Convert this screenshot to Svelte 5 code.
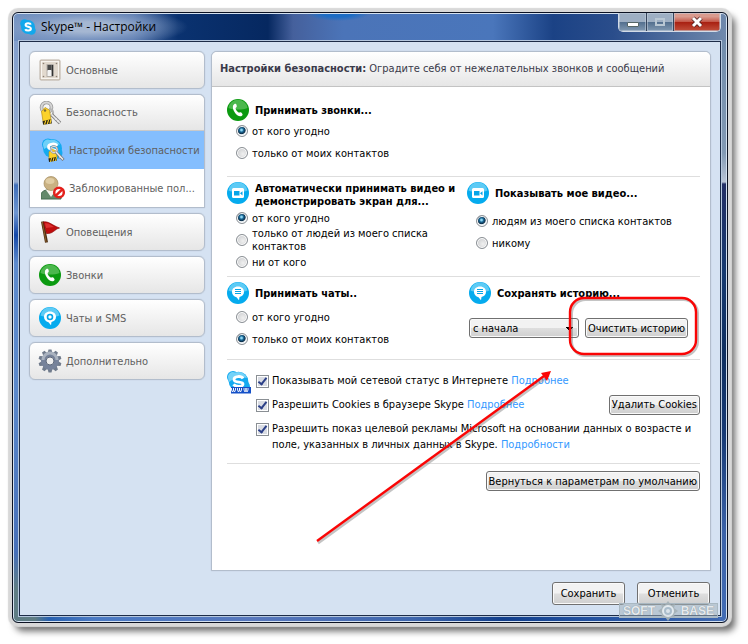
<script>
  const menuTop = [{ id: 'general', label: 'Основные' }];
  const menuBottom = [
    { id: 'flag', label: 'Оповещения' },
    { id: 'phone', label: 'Звонки' },
    { id: 'sms', label: 'Чаты и SMS' },
    { id: 'gear', label: 'Дополнительно' }
  ];
  let calls = $state('all');
  let autoVideo = $state('all');
  let myVideo = $state('contacts');
  let chats = $state('contacts');
  let history = $state('forever');
  const teeth = [0, 36, 72, 108, 144, 180, 216, 252, 288, 324];
</script>

{#snippet icon(id)}
  {#if id === 'general'}
    <svg class="ico24" viewBox="0 0 24 24" aria-hidden="true">
      <rect x="2" y="2" width="20" height="20" rx="1" fill="#e2d9ce" stroke="#b9aea2" />
      <rect x="3.500" y="3.500" width="17" height="17" fill="none" stroke="#f8f4ef" />
      <rect x="8.500" y="6" width="7" height="13" fill="#b4aea8" />
      <rect x="9.500" y="7" width="4" height="6" fill="#4a4a4a" />
      <rect x="9.500" y="12" width="4" height="6" fill="#f4f4f4" />
      <path d="M14.500 7v11" stroke="#333" stroke-width="1.500" />
      <g fill="#8b7f75"><circle cx="5.500" cy="5.500" r=".8" /><circle cx="18.500" cy="5.500" r=".8" /><circle cx="5.500" cy="18.500" r=".8" /><circle cx="18.500" cy="18.500" r=".8" /></g>
    </svg>
  {:else if id === 'keys'}
    <svg class="ico24" viewBox="0 0 24 24" aria-hidden="true">
      <circle cx="8.500" cy="6.500" r="5" fill="none" stroke="#9b9b9b" stroke-width="3.600" />
      <circle cx="8.500" cy="6.500" r="5" fill="none" stroke="#d6d6d6" stroke-width="2" />
      <path d="M3.500 10.500l3.500-4 4.500 2.500 1.500 9.500-8 1.800z" fill="#fcd22b" stroke="#b98f10" stroke-width=".7" />
      <path d="M4.500 20.200l8.800-2 .5 4.300-8.600 1.300z" fill="#2a2410" />
      <path d="M6.500 23.500l1.300-4M9.300 23l1.300-4M12 22.500l1-4" stroke="#fcd22b" stroke-width="1.100" />
      <path d="M11 8c4 0 5 4 3.500 6" fill="none" stroke="#b5b5b5" stroke-width="2" />
      <path d="M13.500 13.500l8.500 8.500M16.500 19l2-2M19 21.500l2-2" stroke="#838383" stroke-width="3.400" />
      <path d="M13.500 13.500l8.300 8.300M17 18.500l1.500-1.500M19.500 21l1.500-1.500" stroke="#ececec" stroke-width="1.600" />
      <circle cx="7" cy="9.500" r="1.200" fill="#7c6b35" />
    </svg>
  {:else if id === 'skypekeys'}
    <svg class="ico24" viewBox="0 0 24 24" aria-hidden="true">
      <g fill="#14aaf0"><circle cx="7" cy="6.500" r="6" /><circle cx="11.500" cy="10.500" r="9.500" /><circle cx="15.500" cy="15" r="6" /></g>
      <path d="M2 7a5 5 0 0 1 7-5 9.500 9.500 0 0 1 10 4.500C14 6 8 8 3 11z" fill="#6fd0f8" />
      <path d="M16 8c-1.500-3-8.500-2.500-8.500 1 0 4 8.500 1.500 8.500 5.500" fill="none" stroke="#fff" stroke-width="2.800" />
      <path d="M8 14l3-3 4 2 1 6-8 2z" fill="#fcd22b" stroke="#c2920b" stroke-width=".6" />
      <path d="M7.500 20.500l8-1.500.5 3.500-8 1.500z" fill="#2a2410" />
      <path d="M9.500 24l1-4M12 23.500l1-4M14.500 23l1-4" stroke="#fcd22b" />
      <circle cx="13" cy="11.500" r="3.200" fill="none" stroke="#999" stroke-width="2" />
      <circle cx="13" cy="11.500" r="3.200" fill="none" stroke="#ddd" />
      <path d="M15 14l7.500 8M18 20l2-2" stroke="#777" stroke-width="3" /><path d="M15 14l7 7.500M18.500 19.500l1-1" stroke="#ececec" stroke-width="1.500" />
    </svg>
  {:else if id === 'blocked'}
    <svg class="ico24" viewBox="0 0 24 24" aria-hidden="true">
      <path d="M0 23v-4c0-3 3-5 7-5h6c4 0 7 2 7 5v4z" fill="#63896b" stroke="#456a50" />
      <path d="M5 14l5 7 5-7z" fill="#f4f4ee" />
      <circle cx="10" cy="7.500" r="7" fill="#c9b182" stroke="#a38b5e" stroke-width=".7" />
      <ellipse cx="9" cy="5" rx="4.500" ry="3" fill="#e0cda5" />
      <circle cx="18" cy="16.500" r="4.800" fill="#fff" stroke="#e3211c" stroke-width="2.500" />
      <path d="M14.800 19.700l6.500-6.400" stroke="#e3211c" stroke-width="2.500" />
    </svg>
  {:else if id === 'flag'}
    <svg class="ico24" viewBox="0 0 24 24" aria-hidden="true">
      <path d="M4.500 1.500l4 21" stroke="#4d2f12" stroke-width="3" />
      <path d="M4.300 2l3.800 20" stroke="#8c5e2c" />
      <path d="M5.500 2c5-1 8 3 16 6-5 1-6 6-13 5.500z" fill="#c00d0d" stroke="#8c0606" stroke-width=".7" />
      <path d="M7 3.200c4-.5 6 2 9 3.800-3 0-5 1-8 1z" fill="#dc2f2f" />
    </svg>
  {:else if id === 'phone'}
    <svg class="ico22" viewBox="0 0 22 22" aria-hidden="true">
      <circle cx="11" cy="11" r="11" fill="#0b9a10" />
      <path d="M1.500 9a9.600 9.600 0 0 1 19 0c-5 2-14 2-19 0z" fill="#4bb84d" />
      <path d="M6.200 6.200C7 5 8 4.400 8.700 4.800c.9.500 1.200 2.200 1 3-.2.800-1.200.9-1.100 1.700.2 1.400 1.800 3.400 3 4 .8.300 1.300-.5 2-.3.900.3 2 1.500 2 2.300 0 .9-1.100 1.800-2.300 1.800C9.500 17.300 4.500 10.200 6.200 6.200z" fill="#fff" />
    </svg>
  {:else if id === 'gear'}
    <svg class="ico24" viewBox="0 0 24 24" aria-hidden="true">
      <g fill="#707b8c">{#each teeth as t}<path d="M9.500 4.500l1-4h3l1 4z" transform="rotate({t} 12 12)" />{/each}</g>
      <circle cx="12" cy="12" r="6.500" fill="none" stroke="#76829a" stroke-width="5" />
      <path d="M5 11a7 7 0 0 1 14 0" fill="none" stroke="#a9b2bf" stroke-width="3" />
      <circle cx="12" cy="12" r="4" fill="#eee" stroke="#5c677a" />
    </svg>
  {:else if id === 'skypeline'}
    <svg class="ico24" viewBox="0 0 24 24" aria-hidden="true">
      <g fill="#14aaf0"><circle cx="6" cy="6" r="6" /><circle cx="11.500" cy="10.500" r="9.800" /><circle cx="17" cy="15.500" r="6" /></g>
      <path d="M1 6.500a5 5 0 0 1 7-5A9.500 9.500 0 0 1 20 7C14 5 7 7 2 11z" fill="#74d2f8" />
      <path d="M16 7.500c-1.500-3-9-2.500-9 1 0 4 9 1.500 9 4.500 0 3-7.500 3-9.500.3" fill="none" stroke="#fff" stroke-width="2.800" />
      <path d="M4 16h20v6.500H4z" fill="#1450c8" />
      <path d="M4.500 17v2l1 2 1-2v-2 2l1 2 1-2v-2M10.500 17v2l1 2 1-2v-2 2l1 2 1-2v-2M17 17v2l1 2 1-2v-2 2l1 2 1-2v-2" fill="none" stroke="#fff" stroke-width=".9" />
    </svg>
  {:else}
    <svg class="ico22" viewBox="0 0 22 22" aria-hidden="true">
      <circle cx="11" cy="11" r="11" fill="#05abee" />
      <path d="M1.500 8.500a9.600 9.600 0 0 1 19 0c-5 2-14 2-19 0z" fill="#5dcbf5" />
      {#if id === 'video'}
        <rect x="5" y="6" width="12" height="10" rx="1.500" fill="#fff" />
        <path d="M7 9h5.500v4.500H7zM13 11.200l2.500-2v4.200z" fill="#05a5e8" />
      {:else if id === 'chat'}
        <path d="M11 4.500c3.600 0 6 2.300 6 5.300 0 2.800-1.800 4.800-4.500 5.200L12 18.200l-2.500-3C6.800 14.600 5 12.600 5 9.800c0-3 2.400-5.300 6-5.300z" fill="#fff" />
        <path d="M8 7.500h6M8 9.500h6M8 11.500h6" stroke="#05a5e8" />
      {:else}
        <path d="M11 4.500c3.600 0 6 2.300 6 5.300 0 2.800-1.800 4.800-4.500 5.200L12 18.200l-2.500-3C6.800 14.600 5 12.600 5 9.800c0-3 2.400-5.300 6-5.300z" fill="#fff" />
        <circle cx="11" cy="10" r="2.500" fill="none" stroke="#05a5e8" stroke-width="1.600" />
      {/if}
    </svg>
  {/if}
{/snippet}

<main class="window">
  <header class="titlebar">
    <svg class="logo" viewBox="0 0 16 16" aria-hidden="true">
      <g fill="#12a8ec"><circle cx="4.500" cy="4.500" r="4.300" /><circle cx="8" cy="8" r="7" /><circle cx="11.500" cy="11.500" r="4.300" /></g>
      <path d="M10.800 5.600C10.200 3.700 5.600 3.700 5.600 5.900c0 2.500 5.300 1.300 5.300 3.900 0 2.300-4.800 2.300-5.700.4" fill="none" stroke="#fff" stroke-width="2" />
    </svg>
    <h1>Skype™ - Настройки</h1>
    <div class="controls">
      <button class="min" aria-label="Свернуть"><svg viewBox="0 0 12 12"><rect x=".5" y="6.500" width="11" height="4" rx=".5" fill="#fff" stroke="#566" /></svg></button>
      <button class="max" aria-label="Развернуть" disabled><svg viewBox="0 0 12 12"><rect x="2" y="3" width="8" height="6" fill="none" stroke="#b9c7d3" stroke-width="2" /></svg></button>
      <button class="close" aria-label="Закрыть"><svg viewBox="0 0 12 12"><path d="M2 2l8 8M10 2l-8 8" stroke="#4c2020" stroke-width="4.500" /><path d="M2 2l8 8M10 2l-8 8" stroke="#fff" stroke-width="3" /></svg></button>
    </div>
  </header>

  <div class="client">
    <div class="columns">
      <nav>
        {#each menuTop as m}
          <button class="card">{@render icon(m.id)}<span>{m.label}</span></button>
        {/each}
        <div class="group">
          <button class="card flat">{@render icon('keys')}<span>Безопасность</span></button>
          <button class="sub active">{@render icon('skypekeys')}<span>Настройки безопасности</span></button>
          <button class="sub">{@render icon('blocked')}<span>Заблокированные пол...</span></button>
        </div>
        {#each menuBottom as m}
          <button class="card">{@render icon(m.id)}<span>{m.label}</span></button>
        {/each}
      </nav>

      <section class="panel">
        <h2><b>Настройки безопасности:</b> Оградите себя от нежелательных звонков и сообщений</h2>
        <div class="body">
          <div class="row first">
            <div>
              <h3>{@render icon('phone')}<span>Принимать звонки...</span></h3>
              <div class="options">
                <label><input type="radio" name="calls" value="all" bind:group={calls} />от кого угодно</label>
                <label><input type="radio" name="calls" value="contacts" bind:group={calls} />только от моих контактов</label>
              </div>
            </div>
          </div>

          <div class="row two video">
            <div>
              <h3 class="double">{@render icon('video')}<span>Автоматически принимать видео и<br />демонстрировать экран для...</span></h3>
              <div class="options">
                <label><input type="radio" name="auto" value="all" bind:group={autoVideo} />от кого угодно</label>
                <label><input type="radio" name="auto" value="contacts" bind:group={autoVideo} /><span>только от людей из моего списка<br />контактов</span></label>
                <label><input type="radio" name="auto" value="none" bind:group={autoVideo} />ни от кого</label>
              </div>
            </div>
            <div>
              <h3>{@render icon('video')}<span>Показывать мое видео...</span></h3>
              <div class="options spaced">
                <label><input type="radio" name="mine" value="contacts" bind:group={myVideo} />людям из моего списка контактов</label>
                <label><input type="radio" name="mine" value="none" bind:group={myVideo} />никому</label>
              </div>
            </div>
          </div>

          <div class="row two chats">
            <div>
              <h3>{@render icon('chat')}<span>Принимать чаты..</span></h3>
              <div class="options chatlist">
                <label><input type="radio" name="chats" value="all" bind:group={chats} />от кого угодно</label>
                <label><input type="radio" name="chats" value="contacts" bind:group={chats} />только от моих контактов</label>
              </div>
            </div>
            <div class="keep">
              <h3>{@render icon('chat')}<label for="history">Сохранять историю...</label></h3>
              <div class="tools">
                <select id="history" bind:value={history}>
                  <option value="forever">с начала</option>
                  <option value="month">1 месяц</option>
                  <option value="none">не сохранять</option>
                </select>
                <button class="btn">Очистить историю</button>
              </div>
            </div>
          </div>

          <div class="row privacy">
            {@render icon('skypeline')}
            <div class="checks">
              <div class="check">
                <input id="c1" type="checkbox" checked />
                <p><label for="c1">Показывать мой сетевой статус в Интернете</label> <a href="#status">Подробнее</a></p>
              </div>
              <div class="check">
                <input id="c2" type="checkbox" checked />
                <p><label for="c2">Разрешить Cookies в браузере Skype</label> <a href="#cookies">Подробнее</a></p>
                <button class="btn">Удалить Cookies</button>
              </div>
              <div class="check">
                <input id="c3" type="checkbox" checked />
                <p><label for="c3">Разрешить показ целевой рекламы Microsoft на основании данных о возрасте и<br />поле, указанных в личных данных в Skype.</label> <a href="#ads">Подробности</a></p>
              </div>
            </div>
          </div>
          <div class="reset"><button class="btn">Вернуться к параметрам по умолчанию</button></div>
        </div>
      </section>
    </div>
    <footer>
      <button class="btn big">Сохранить</button>
      <button class="btn big">Отменить</button>
    </footer>
  </div>

  <svg class="marks" width="400" height="260" viewBox="0 0 400 260" aria-hidden="true">
    <g fill="none" stroke="#555" stroke-opacity=".35" stroke-width="3">
      <rect x="262.500" y="10.500" width="126" height="56" rx="14" /><path d="M9 254L236 89" />
    </g>
    <g fill="none" stroke="#fa0505" stroke-width="2.400">
      <rect x="261" y="9" width="126" height="56" rx="14" /><path d="M8 252L235 87" />
    </g>
    <path d="M242 82l-4 10-6-8z" fill="#fa0505" />
  </svg>
  <div class="watermark">
    <span>SOFT</span>
    <svg viewBox="0 0 20 20" aria-hidden="true"><path d="M10 0l3 4 4-1-1 4 4 3-4 3 1 4-4-1-3 4-3-4-4 1 1-4-4-3 4-3-1-4 4 1z" fill="#a5b2b8" /><circle cx="10" cy="10" r="5" fill="#a9bccb" stroke="#e9eff3" stroke-width="2" /><circle cx="10" cy="10" r="2" fill="#dfe8ee" /></svg>
    <span>BASE</span>
  </div>
</main>

<style>
  :global(body) { background: #fff; }
  .window {
    position: relative;
    box-sizing: border-box;
    margin: 12px 20px 20px 12px;
    padding: 0 6px 6px;
    border: 1px solid #0c1222;
    border-radius: 6px;
    font: 11px/13px 'DejaVu Sans Condensed', 'DejaVu Sans', sans-serif;
    color: #000;
    background:
      radial-gradient(ellipse 100px 20px at 75px 14px, #a5b7d2 0 25%, #8fa6ca99 60%, transparent) top left / 100% 28px no-repeat,
      radial-gradient(ellipse 32px 8px at 325px 0, #1c6cc4 50%, transparent) top left / 100% 28px no-repeat,
      linear-gradient(90deg, #6f8fc0 0, #4f71aa 120px, #0a3270 165px, #062860 255px, #45609c 280px, #4b74b8 330px, #4a76bb 480px, #1b4285 540px, #2a4d8b 600px, #7089ac 100%) top / 100% 28px no-repeat,
      linear-gradient(#6e8aaa 0, #8299b4 140px, #b9c4d6 169px, #232f66 171px, #173a70 260px, #0f2f60 340px, #173a75 420px, #3b62a8 520px, #426cb5 100%) right / 8px 100% no-repeat,
      linear-gradient(#7f9ccb 0, #97add0 169px, #3f6eb8 172px, #6d95d0 200px, #1448a8 222px, #5d8acc 250px, #5b88ca 380px, #466fb8 540px, #5f7d84 575px, #5f7d84 100%) left / 8px 100% no-repeat,
      linear-gradient(90deg, #5f7d84 22px, #2861b0 36px, #4a7ac4 80px, #5878bd 240px, #3e66ad 400px, #123f8c 490px, #1f4f9e 560px, #4069b0 100%);
    box-shadow: inset 0 0 0 1px #d4e1f0, 0 0 1px 4px #d8d8d8, 5px 6px 7px 2px rgba(0, 0, 0, .6);
  }
  .titlebar { display: flex; align-items: center; height: 28px; padding-left: 1px; }
  .logo { width: 16px; height: 16px; }
  h1 { flex: 1; margin: 0 0 0 5px; font: 12px/16px 'Open Sans', 'Noto Sans', sans-serif; }
  .controls { display: flex; align-self: flex-start; border: 1px solid #d3dce8; border-top: 0; border-radius: 0 0 5px 5px; overflow: hidden; }
  .controls button { display: grid; place-items: center; height: 18px; padding: 0; border: 0; border-right: 1px solid #35445c; background: linear-gradient(#9eafc3 0 48%, #54708f 52%, #8199b2); box-shadow: inset 0 0 0 1px #c4d0dd88; }
  .controls svg { width: 12px; height: 12px; }
  .controls .min { width: 28px; }
  .controls .max { width: 27px; }
  .controls .close { width: 46px; border: 0; background: linear-gradient(#d99a8e 0 20%, #c4594a 48%, #a92112 52%, #c2503c); }

  .client { border: 1px solid #1d2c48; outline: 1px solid #b5c7de; background: #d5e2f2; padding: 9px 9px 10px; }
  .columns { display: grid; grid-template-columns: 176px minmax(0, 1fr); gap: 6px; }
  nav { display: flex; flex-direction: column; gap: 5px; }
  .card, .group, .panel { border: 1px solid #b2bdcc; border-radius: 6px; box-shadow: 0 0 1px #a4b0c0; }
  .card { box-sizing: border-box; display: flex; align-items: center; gap: 4px; height: 38px; padding: 0 8px; background: linear-gradient(#fff, #e6e6e6); }
  .card, .sub { font: inherit; color: #606060; text-align: left; }
  .group { box-sizing: border-box; height: 114px; background: #fff; border-radius: 6px 6px 0 0; }
  .flat { width: 100%; height: 36px; border: 0; border-bottom: 1px solid #c9c9c9; border-radius: 6px 6px 0 0; box-shadow: none; }
  .sub { display: flex; align-items: center; gap: 4px; width: 100%; height: 38px; padding: 0 0 0 10px; border: 1px solid transparent; background: #fff; white-space: nowrap; }
  .active { background: #84befe; }
  .ico24 { width: 24px; height: 24px; flex: none; }
  .ico22 { width: 22px; height: 22px; flex: none; }
  .card .ico22 { margin: 0 1px; }

  .panel { background: #fff; border-radius: 6px 6px 0 0; overflow: hidden; }
  h2 { margin: 0; padding: 0 8px; font: inherit; line-height: 34px; color: #3a3a4a; background: linear-gradient(#fff, #e6e6e6); border-bottom: 1px solid #c3c3c3; white-space: nowrap; }
  .body { padding: 0 10px 79px 15px; }
  .row { border-bottom: 1px solid #dedede; }
  .first { padding: 12px 0 13px; }
  .video { padding: 5px 0 4px; }
  .chats { padding: 5px 0 10px; }
  .two { display: grid; grid-template-columns: 240px minmax(0, 1fr); }
  h3 { display: flex; align-items: center; gap: 6px; min-height: 22px; margin: 0; font: bold 11px/13px 'DejaVu Sans Condensed', 'DejaVu Sans', sans-serif; white-space: nowrap; }
  .double { align-items: flex-start; }
  .options { display: flex; flex-direction: column; gap: 2px; padding-left: 9px; }
  .options label { display: flex; align-items: center; gap: 4px; height: 20px; white-space: nowrap; }
  .spaced { padding-top: 7px; }
  .chatlist { padding-top: 3px; }
  input { appearance: none; flex: none; margin: 0; }
  input[type='radio'] { width: 12px; height: 12px; border: 1px solid #8a8f94; border-radius: 50%; background: radial-gradient(circle at 60% 60%, #f0f0f0, #c3c5c8); box-shadow: inset 0 0 0 1px #fff; }
  input[type='radio']:checked { background: radial-gradient(circle at 45% 40%, #8fd6f2 0 10%, #1c6d9c 24%, #0c2d48 46%, #e1e8ec 56%); }
  input[type='checkbox'] { box-sizing: border-box; width: 13px; height: 13px; border: 1px solid #8a8f94; background: #d9dce3; box-shadow: inset 0 0 0 1px #fff; margin: 2px 0 0; display: grid; place-items: center; }
  input[type='checkbox']:checked::before { content: ''; width: 3px; height: 7px; margin-top: -2px; border: solid #2b3f87; border-width: 0 2px 2px 0; transform: rotate(38deg); }

  .keep { padding-left: 2px; }
  .tools { display: flex; align-items: center; gap: 6px; padding-top: 14px; }
  select, .btn { box-sizing: border-box; height: 20px; border: 1px solid #707070; border-radius: 3px; font: inherit; color: #000; background: linear-gradient(#f2f2f2 0 48%, #dedede 52%, #cfcfcf); box-shadow: inset 0 0 0 1px #fafafa; white-space: nowrap; }
  select { appearance: none; width: 110px; padding: 0 3px; background: linear-gradient(#000, #000) right 5px top 8px / 7px 1px no-repeat, linear-gradient(#000, #000) right 6px top 9px / 5px 1px no-repeat, linear-gradient(#000, #000) right 7px top 10px / 3px 1px no-repeat, linear-gradient(#f2f2f2 0 48%, #dedede 52%, #cfcfcf); }
  .btn { padding: 0 2px; }
  .big { height: 23px; min-width: 73px; }
  .privacy { display: flex; gap: 5px; padding: 11px 0 10px; }
  .checks { flex: 1; display: flex; flex-direction: column; gap: 8px; padding-top: 2px; line-height: 16px; }
  .check { display: flex; align-items: flex-start; gap: 3px; white-space: nowrap; }
  .check p { flex: 1; margin: 0; }
  .check .btn { margin: -2px 0; }
  a { color: #3399ff; text-decoration: none; }
  .reset { display: flex; justify-content: flex-end; padding-top: 7px; }
  footer { display: flex; justify-content: flex-end; gap: 12px; padding: 11px 1px 0 0; }

  .marks { position: absolute; left: 296px; top: 276px; pointer-events: none; }
  .watermark { position: absolute; right: 9px; bottom: 4px; display: flex; align-items: center; justify-content: space-between; box-sizing: border-box; width: 99px; height: 15px; padding: 0 3px; background: #a3b2ba88; border: 1px solid #a9b8c2; font: bold 12px/12px 'Liberation Sans', sans-serif; color: #e6eaed; text-shadow: 0 0 1px #73828c; pointer-events: none; }
  .watermark svg { width: 20px; height: 20px; flex: none; opacity: .9; }
</style>
